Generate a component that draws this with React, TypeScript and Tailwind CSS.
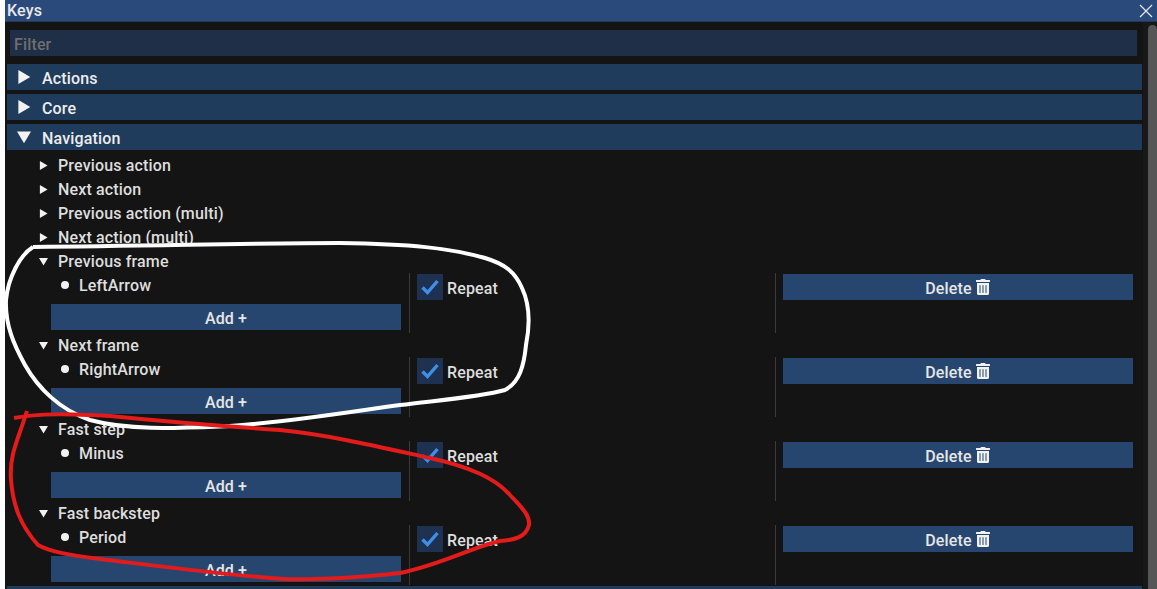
import { FaTrashAlt } from "react-icons/fa";

const collapsedKeys = ["Previous action", "Next action", "Previous action (multi)", "Next action (multi)"];

const boundKeys = [
  { name: "Previous frame", key: "LeftArrow" },
  { name: "Next frame", key: "RightArrow" },
  { name: "Fast step", key: "Minus" },
  { name: "Fast backstep", key: "Period" },
];

function Arrow({ open, size }: { open?: boolean; size: number }) {
  return (
    <svg width={size} height={size} viewBox="0 0 10 10" className="shrink-0 fill-[#f2f2f2]">
      {open ? <polygon points="0,1 10,1 5,9.5" /> : <polygon points="1,0 9.5,5 1,10" />}
    </svg>
  );
}

function Section({ title, open }: { title: string; open?: boolean }) {
  return (
    <div className="ml-[2px] mr-[1px] flex h-[26px] items-center bg-[#203c5c] pl-[10px] text-[#ededed]">
      <Arrow open={open} size={14} />
      <span className="ml-[11px] translate-y-[2px]">{title}</span>
    </div>
  );
}

function TreeRow({ name, open }: { name: string; open?: boolean }) {
  return (
    <div className="flex h-[24px] items-center pl-[34px]">
      <Arrow open={open} size={9} />
      <span className="ml-[10px] translate-y-[1px]">{name}</span>
    </div>
  );
}

function KeyBinding({ name, keyName }: { name: string; keyName: string }) {
  return (
    <div className="h-[84px]">
      <TreeRow name={name} open />
      <div className="flex h-[60px]">
        <div className="flex w-[404px] flex-col">
          <div className="flex h-[24px] items-center pl-[56px]">
            <span className="size-[8px] rounded-full bg-[#f2f2f2]" />
            <span className="ml-[10px] translate-y-[1px]">{keyName}</span>
          </div>
          <button
            type="button"
            className="mt-[7px] ml-[46px] h-[26px] w-[350px] bg-[#27466f] pt-[3px] text-center text-[#e6e6e6]"
          >
            Add +
          </button>
        </div>
        <div className="mb-[-1px] h-[60px] w-px bg-[#3a3a3a]" />
        <div className="flex w-[365px] items-start pl-[7px] pt-[1px]">
          <div className="flex items-center">
            <span className="flex size-[26px] items-center justify-center bg-[#1f3150]">
              <svg width="18" height="16" viewBox="0 0 18 16" fill="none" className="stroke-[#3d8fe8]">
                <path d="M1.5 8.5 L6.5 13.5 L16.5 2" strokeWidth="3.4" />
              </svg>
            </span>
            <span className="ml-[4px] translate-y-[2px]">Repeat</span>
          </div>
        </div>
        <div className="h-[60px] w-px bg-[#3a3a3a]" />
        <div className="pl-[7px] pt-[1px]">
          <button
            type="button"
            className="flex h-[26px] w-[350px] items-center justify-center gap-[3px] bg-[#27466f] text-[#e6e6e6]"
          >
            <span className="translate-y-[2px]">Delete</span>
            <FaTrashAlt className="size-[16px] text-[#f2f2f2]" />
          </button>
        </div>
      </div>
    </div>
  );
}

export default function App() {
  return (
    <div className="relative flex h-[589px] w-[1157px] overflow-hidden bg-white font-['Roboto',sans-serif] text-[16px] font-medium tracking-[0.15px] text-[#dedede]">
      <div className="ml-[5px] flex min-w-0 flex-1 flex-col bg-[#141414]">
        <div className="flex h-[22px] shrink-0 items-center justify-between border-b border-[#24395a] bg-[#2a4a7c] pl-[2px] pr-[4px] text-[#e8e8e8]">
          <span>Keys</span>
          <svg width="14" height="14" viewBox="0 0 14 14" className="stroke-[#e4e8f0]" strokeWidth="1.2">
            <path d="M1 1 L13 13 M13 1 L1 13" />
          </svg>
        </div>
        <div className="flex min-h-0 flex-1">
          <div className="min-w-0 flex-1 pt-[8px]">
            <div className="mb-[8px] ml-[5px] mr-[6px] flex h-[26px] items-center bg-[#1f2f48] pl-[4px] text-[#6e6e6e]">
              <span className="translate-y-[2px]">Filter</span>
            </div>
            <div className="flex flex-col gap-[4px]">
              <Section title="Actions" />
              <Section title="Core" />
              <Section title="Navigation" open />
            </div>
            <div className="pt-[3px]">
              {collapsedKeys.map((name) => (
                <TreeRow key={name} name={name} />
              ))}
              {boundKeys.map((item) => (
                <KeyBinding key={item.name} name={item.name} keyName={item.key} />
              ))}
            </div>
          </div>
          <div className="w-[14px] shrink-0 bg-[#181818] pl-[5px] pt-[3px]">
            <div className="h-full rounded-t-full bg-[#565656]" />
          </div>
        </div>
      </div>

      {/* hand drawn marks on top of the screenshot */}
      <svg width="1157" height="589" viewBox="0 0 1157 589" fill="none" className="pointer-events-none absolute inset-0">
        <path
          d="M33 247 C20 255 8 278 6 300 C5 325 14 345 25 365 C38 388 60 410 90 420 C130 431 180 428 230 426 C290 422 350 412 400 405 C440 400 480 397 505 390 C520 382 524 365 526 345 C530 325 530 305 522 288 C515 272 505 264 485 258 C450 248 410 244 340 243 C260 243 150 246 33 247"
          stroke="#ffffff"
          strokeWidth="4"
        />
        <path
          d="M14 418 C40 413 70 414 110 416 C160 421 220 426 280 430 C330 435 380 447 430 458 C470 467 495 478 510 495 C522 508 530 515 529 525 C526 537 515 540 500 541 C470 548 440 565 400 573 C360 578 300 581 270 578 C210 573 150 565 100 559 C70 555 50 552 38 545 C20 525 13 505 11 480 C9 455 18 440 27 411"
          stroke="#e31b1b"
          strokeWidth="4"
        />
      </svg>
      <div className="absolute bottom-0 left-[7px] h-[3px] w-[1135px] bg-[#203c5c]" />
    </div>
  );
}
